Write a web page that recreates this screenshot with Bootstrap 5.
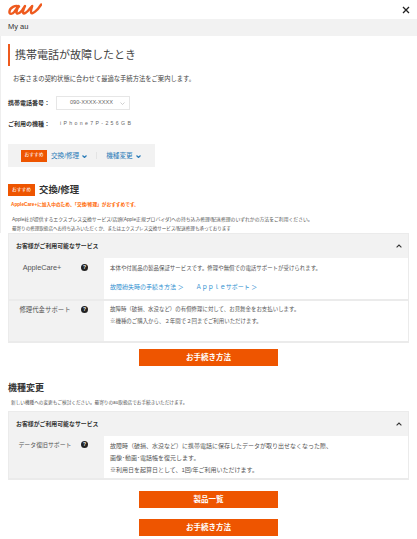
<!DOCTYPE html>
<html lang="ja"><head><meta charset="utf-8">
<link href="https://cdn.jsdelivr.net/npm/bootstrap@5.3.0/dist/css/bootstrap.min.css" rel="stylesheet">
<style>
html,body{height:539px;overflow:hidden}
body{font-family:"Liberation Sans","Noto Sans CJK JP",sans-serif;color:#444;background:#fff;font-size:6px;line-height:1.4}
.top-bar{height:19px;padding:0 7px 0 8px}
.top-bar svg{display:block}
.band{height:17px;background:#f2f2f2;padding-left:8px;font-size:7.5px;color:#333}
.upper{padding:8px 8px 0 7px;border-left:1px solid #eee}
.lower{padding:0 8px}
.ttl{border-left:2px solid #ee5a1e;height:22px;padding-left:5px;font-size:11px;margin:0;font-weight:400;line-height:22px;color:#444}
.intro{margin:8px 0 0 5px;font-size:6.3px;height:10px;line-height:10px}
.lbl{font-weight:700;font-size:6px;width:48px;color:#333}
.sel{width:74px;height:14px;border:1px solid #e6e6e6;padding:0 4px 0 13px;font-size:5.6px;color:#666}
.f-row1{margin-top:12px}
.f-row2{margin-top:9px;height:10px}
.model{font-size:5.2px;letter-spacing:2.35px;color:#666;margin-left:4px}
.pick{width:147px;height:23px;background:#f2f2f2;margin-top:15px;padding-left:13px}
.tag{background:#ee5500;color:#fff;font-size:4.8px;display:flex;align-items:center;justify-content:center;width:26px;height:12px}
.lnk{color:#2b7cb8;font-size:6.6px}
.lnk svg{margin-left:3px}
.sep{width:1px;height:7px;background:#e4e4e4;margin:0 9px}
.sec-h{margin-top:17px;height:12px}
.sec-h .tag{width:27px;height:12px;margin-right:4px}
.sec-t{font-size:9.4px;font-weight:700;color:#333;margin:0;line-height:12px}
.rec{color:#f60;font-weight:700;font-size:4.7px;margin:4px 0 0 3px;height:9px;line-height:9px}
.note{font-size:4.83px;margin:6px 0 0 4px;line-height:9px;height:18px;color:#555}
.note2{font-size:4.56px}
.acc{background:#f2f2f2;border:1px solid #ebebeb;border-width:1px 1px 0 1px}
.acc-h{height:24px;padding:0 6px 0 7px;font-size:5.9px;font-weight:700;color:#333}
.acc-r{display:flex;border-bottom:2px solid #ebebeb}
.acc-l{width:95px;flex:none;padding:3px 16px 0 0;font-size:6.4px;color:#555;line-height:12px}
.acc-l span:first-child{flex:1;text-align:center}
.acc-l.first-l{padding-top:4px}
.acc-l .lab-a{font-size:7.3px;padding-right:6px}
.acc-l .lab-d{font-size:5.9px}
.q{width:7px;height:7px;border-radius:50%;background:#222;color:#fff;font-size:5px;line-height:7px;text-align:center;font-weight:700;flex:none;margin-top:2px}
.acc-c{flex:1;background:#fff;padding:5px 6px 0 6px;font-size:5.45px;color:#555}
.acc-c p{margin:0}
.first-pad{padding-top:7px}
.blue{color:#2f8fd0;font-size:6px;margin-top:10px!important}
.line2{margin-top:4px!important}
.cta{display:block;width:139px;height:17px;margin:0 auto;padding:0;background:#ee5500;border:0;border-radius:0;color:#fff;font-weight:700;font-size:7.5px;line-height:17px;text-align:center}
.cta:hover{background:#ee5500;color:#fff}
.h2x{font-size:9px;font-weight:700;color:#333;margin:16px 0 0;line-height:12px}
.sub{font-size:4.65px;margin:5px 0 0 3px;line-height:8px;height:8px;color:#555}
.acc-c.big{line-height:12px;padding-top:4px;font-size:6px}
</style></head><body>
<div class="top-bar d-flex align-items-center justify-content-between">
<svg width="34" height="13" viewBox="0 0 34 13"><path d="M11 3.6C7.6 1.6 1.6 4.6 1.4 9c-.1 2.6 3 2.4 5-.2L10.6 3c-1.2 2.6-2.6 5.4-2 7 .6 1.4 3.2.2 5.4-2.6L17 3c-1.4 3-2.6 5.6-1.8 7 .9 1.4 3.8-.6 6-3.6L24.2 3c-1 3-1.8 5.4-1 6.8 1 1.6 6-2 10-8.4" fill="none" stroke="#ee5a1e" stroke-width="2.4" stroke-linecap="round" stroke-linejoin="round"/></svg>
<svg width="8" height="8" viewBox="0 0 8 8"><path d="M1 1l6 6M7 1L1 7" stroke="#222" stroke-width="1.3"/></svg>
</div>
<div class="band d-flex align-items-center">My au</div>
<div class="upper">
<h1 class="ttl">携帯電話が故障したとき</h1>
<p class="intro">お客さまの契約状態に合わせて最適な手続方法をご案内します。</p>
<div class="d-flex align-items-center f-row1"><span class="lbl">携帯電話番号：</span>
<div class="sel d-flex align-items-center justify-content-between"><span>090-XXXX-XXXX</span><svg width="5" height="3" viewBox="0 0 5 3"><path d="M.5.5l2 2 2-2" fill="none" stroke="#bbb" stroke-width=".7"/></svg></div></div>
<div class="d-flex align-items-center f-row2"><span class="lbl">ご利用の機種：</span><span class="model">iPhone7P-256GB</span></div>
<div class="pick d-flex align-items-center"><span class="tag">おすすめ</span><span class="lnk ms-1">交換/修理<svg width="5" height="3" viewBox="0 0 5 3"><path d="M.5.5l2 2 2-2" fill="none" stroke="#2b7cb8" stroke-width="1.2"/></svg></span><span class="sep"></span><span class="lnk">機種変更<svg width="5" height="3" viewBox="0 0 5 3"><path d="M.5.5l2 2 2-2" fill="none" stroke="#2b7cb8" stroke-width="1.2"/></svg></span></div>
<div class="sec-h d-flex align-items-center"><span class="tag">おすすめ</span><h2 class="sec-t">交換/修理</h2></div>
<p class="rec">AppleCare+に加入中のため、「交換/修理」がおすすめです。</p>
<p class="note">Apple社が提供するエクスプレス交換サービス/店頭(Apple正規プロバイダ)への持ち込み修理/配送修理のいずれかの方法をご利用ください。<br><span class="note2">最寄りの修理取扱店へお持ち込みいただくか、またはエクスプレス交換サービス/配送修理も承っております</span></p>
</div>
<div class="lower">
<div class="acc">
<div class="acc-h d-flex align-items-center justify-content-between"><span>お客様がご利用可能なサービス</span><svg width="6" height="4" viewBox="0 0 6 4"><path d="M.6 3.4L3 1l2.4 2.4" fill="none" stroke="#333" stroke-width="1.1"/></svg></div>
<div class="acc-r" style="height:43px"><div class="acc-l first-l d-flex align-items-start"><span class="lab-a">AppleCare+</span><span class="q">?</span></div><div class="acc-c first-pad"><p>本体や付属品の製品保証サービスです。修理や無償での電話サポートが受けられます。</p><p class="blue">故障紛失時の手続き方法 ＞&emsp;&emsp;Ａｐｐｌｅサポート ＞</p></div></div>
<div class="acc-r" style="height:42px"><div class="acc-l d-flex align-items-start"><span>修理代金サポート</span><span class="q">?</span></div><div class="acc-c"><p>故障時（破損、水没など）の有償修理に対して、お見舞金をお支払いします。</p><p class="line2">※機種のご購入から、２年間で２回までご利用いただけます。</p></div></div>
</div>
<a class="btn cta" href="#" style="margin-top:6px">お手続き方法</a>
<h2 class="h2x">機種変更</h2>
<p class="sub">新しい機種への変更もご検討ください。最寄りのau取扱店でお手続きいただけます。</p>
<div class="acc" style="margin-top:4px">
<div class="acc-h d-flex align-items-center justify-content-between"><span>お客様がご利用可能なサービス</span><svg width="6" height="4" viewBox="0 0 6 4"><path d="M.6 3.4L3 1l2.4 2.4" fill="none" stroke="#333" stroke-width="1.1"/></svg></div>
<div class="acc-r" style="height:44px"><div class="acc-l d-flex align-items-start"><span class="lab-d">データ復旧サポート</span><span class="q">?</span></div><div class="acc-c big"><p>故障時（破損、水没など）に携帯電話に保存したデータが取り出せなくなった際、</p><p>画像･動画･電話帳を復元します。</p><p>※利用日を起算日として、1回/年ご利用いただけます。</p></div></div>
</div>
<a class="btn cta" href="#" style="margin-top:11px">製品一覧</a>
<a class="btn cta" href="#" style="margin-top:11px">お手続き方法</a>
</div>
<script src="https://cdn.jsdelivr.net/npm/bootstrap@5.3.0/dist/js/bootstrap.bundle.min.js"></script>
</body></html>
